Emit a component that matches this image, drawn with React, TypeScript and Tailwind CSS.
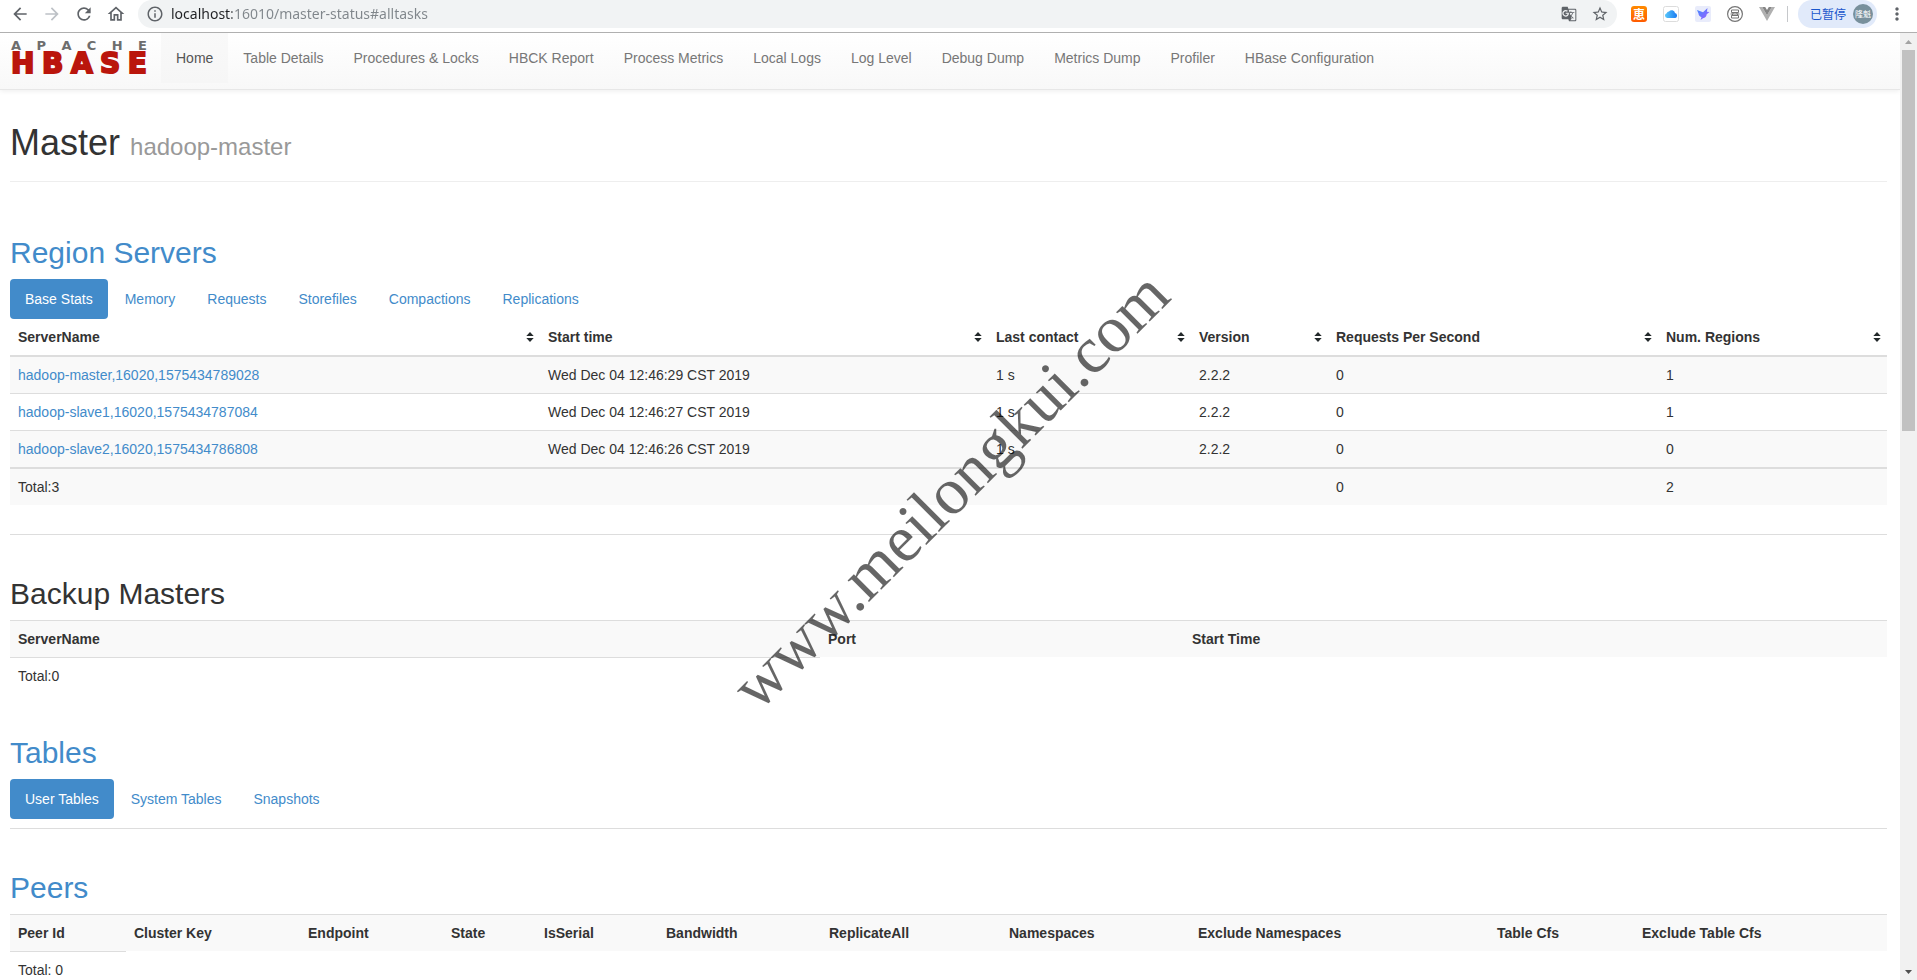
import { useState } from 'react';
import { MdArrowBack, MdArrowForward, MdRefresh, MdOutlineHome, MdInfoOutline, MdStarBorder, MdGTranslate, MdMoreVert } from 'react-icons/md';

interface RegionServer {
    name: string;
    startTime: string;
    lastContact: string;
    version: string;
    requests: number;
    regions: number;
}

const navItems = [
    'Home',
    'Table Details',
    'Procedures & Locks',
    'HBCK Report',
    'Process Metrics',
    'Local Logs',
    'Log Level',
    'Debug Dump',
    'Metrics Dump',
    'Profiler',
    'HBase Configuration',
];

const servers: RegionServer[] = [
    { name: 'hadoop-master,16020,1575434789028', startTime: 'Wed Dec 04 12:46:29 CST 2019', lastContact: '1 s', version: '2.2.2', requests: 0, regions: 1 },
    { name: 'hadoop-slave1,16020,1575434787084', startTime: 'Wed Dec 04 12:46:27 CST 2019', lastContact: '1 s', version: '2.2.2', requests: 0, regions: 1 },
    { name: 'hadoop-slave2,16020,1575434786808', startTime: 'Wed Dec 04 12:46:26 CST 2019', lastContact: '1 s', version: '2.2.2', requests: 0, regions: 0 },
];

const serverColumns = [
    { label: 'ServerName', width: 'w-[530px]' },
    { label: 'Start time', width: 'w-[448px]' },
    { label: 'Last contact', width: 'w-[203px]' },
    { label: 'Version', width: 'w-[137px]' },
    { label: 'Requests Per Second', width: 'w-[330px]' },
    { label: 'Num. Regions', width: 'w-[229px]' },
];

const backupColumns = [
    { label: 'ServerName', width: 'w-[810px]' },
    { label: 'Port', width: 'w-[364px]' },
    { label: 'Start Time', width: 'w-[703px]' },
];

const peerColumns = [
    { label: 'Peer Id', width: 'w-[116px]' },
    { label: 'Cluster Key', width: 'w-[174px]' },
    { label: 'Endpoint', width: 'w-[143px]' },
    { label: 'State', width: 'w-[93px]' },
    { label: 'IsSerial', width: 'w-[122px]' },
    { label: 'Bandwidth', width: 'w-[163px]' },
    { label: 'ReplicateAll', width: 'w-[180px]' },
    { label: 'Namespaces', width: 'w-[189px]' },
    { label: 'Exclude Namespaces', width: 'w-[299px]' },
    { label: 'Table Cfs', width: 'w-[145px]' },
    { label: 'Exclude Table Cfs', width: 'w-[253px]' },
];

function Extensions() {
    return (
        <div className="flex h-7 items-center gap-4">
            <button aria-label="Coupons" className="size-4 rounded-[3px] bg-linear-to-b from-[#ff8a00] to-[#ff5a00] font-['Noto_Sans_CJK_JP',sans-serif] text-xs leading-4 font-bold text-white">
                恵
            </button>
            <button aria-label="Cloud">
                <svg viewBox="0 0 16 16" className="size-4">
                    <defs>
                        <linearGradient id="cloud" x1="0" x2="1">
                            <stop offset="0" stopColor="#5ac8fa" />
                            <stop offset="1" stopColor="#1a7af0" />
                        </linearGradient>
                    </defs>
                    <rect x="0.5" y="0.5" width="15" height="15" rx="2" fill="#fff" stroke="#dcdcdc" />
                    <path d="M4.2 12a2.4 2.4 0 0 1-.5-4.7A2.3 2.3 0 0 1 6 5.600 3.300 3.300 0 0 1 12 7a2.600 2.600 0 0 1 .3 5z" fill="url(#cloud)" />
                </svg>
            </button>
            <button aria-label="Bird">
                <svg viewBox="0 0 16 16" className="size-4">
                    <defs>
                        <linearGradient id="bird" x1="0" x2="1" y2="1">
                            <stop offset="0" stopColor="#3f8cff" />
                            <stop offset="1" stopColor="#a259ff" />
                        </linearGradient>
                    </defs>
                    <rect width="16" height="16" rx="2" fill="#e9ecfb" />
                    <path d="M2 4l6 2.200L12.500 2l-.6 3.700 2.600.3-2.800 2.300c-.2 2.400-1.600 3.700-3.700 3.900L5.500 14l1-2.800C4.600 10.600 3.600 9.300 3.500 7.500z" fill="url(#bird)" />
                </svg>
            </button>
            <button aria-label="Seal">
                <svg viewBox="0 0 16 16" className="size-4" fill="none" stroke="#757575">
                    <circle cx="8" cy="8" r="7.4" strokeWidth="1.2" />
                    <path d="M4.500 4v2.500h7V4zM4.500 12V9.500h7V12zM3.500 8h9M6.500 6.500L5 9.500M9.500 6.500l1.500 3" />
                </svg>
            </button>
            <button aria-label="Vue">
                <svg viewBox="0 0 16 16" className="size-4">
                    <path d="M0 1h3.200L8 9.300 12.800 1H16L8 15z" fill="#b0b0b0" />
                    <path d="M3.200 1h3L8 4.100 9.800 1h3L8 9.300z" fill="#858585" />
                </svg>
            </button>
        </div>
    );
}

function BrowserBar() {
    const [url, setUrl] = useState('localhost:16010/master-status#alltasks');

    return (
        <header className="flex h-[33px] shrink-0 items-start border-b border-[#b0b0b0] bg-white px-[10px] text-[#5f6368]">
            <div className="flex h-7 items-center gap-3">
                <button aria-label="Back"><MdArrowBack className="size-5" /></button>
                <button aria-label="Forward" className="text-[#bdc1c6]"><MdArrowForward className="size-5" /></button>
                <button aria-label="Reload"><MdRefresh className="size-5" /></button>
                <button aria-label="Home page"><MdOutlineHome className="size-5" /></button>
            </div>
            <div className="mr-[14px] ml-3 flex h-7 min-w-0 flex-1 items-center rounded-full bg-[#f1f3f4] px-2">
                <MdInfoOutline className="size-[18px] shrink-0" />
                <input
                    aria-label="Address"
                    value={url}
                    onChange={e => setUrl(e.target.value)}
                    className="ml-[7px] min-w-0 flex-1 bg-[linear-gradient(90deg,#202124_61px,#80868b_61px)] bg-clip-text font-['Noto_Sans',sans-serif] text-sm text-transparent outline-none"
                />
                <div className="flex items-center gap-[14px]">
                    <button aria-label="Translate"><MdGTranslate className="size-4" /></button>
                    <button aria-label="Bookmark"><MdStarBorder className="size-[18px]" /></button>
                </div>
            </div>
            <Extensions />
            <div className="mr-[10px] ml-3 mt-1.5 h-4 w-px bg-[#c6c8cb]" />
            <button className="flex h-7 items-center gap-[7px] rounded-full bg-[#e1eafa] pr-1 pl-3 font-['Noto_Sans_CJK_SC',sans-serif] text-xs text-[#1a56cc]">
                已暂停
                <span className="flex size-5 items-center justify-center rounded-full bg-[#78909c] text-[8px] text-white">隆魁</span>
            </button>
            <button aria-label="Menu" className="ml-[10px] flex h-7 items-center"><MdMoreVert className="size-5" /></button>
        </header>
    );
}

function Logo() {
    return (
        <a href="#" aria-label="Apache HBase" className="mt-[7px] mr-[14px] ml-[11px] flex w-[136px] flex-col gap-px font-['DejaVu_Sans',sans-serif] font-bold">
            <span className="flex justify-between text-[13px] leading-[11px] text-[#6d6d6d]">
                {['A', 'P', 'A', 'C', 'H', 'E'].map((letter, i) => <span key={i}>{letter}</span>)}
            </span>
            <span className="flex justify-between text-[28px] leading-6 text-[#ba160c] [-webkit-text-stroke:2px_#ba160c]">
                {['H', 'B', 'A', 'S', 'E'].map(letter => <span key={letter}>{letter}</span>)}
            </span>
        </a>
    );
}

function Navbar() {
    return (
        <nav className="flex h-[57px] shrink-0 items-start border-b border-[#e7e7e7] bg-linear-to-b from-white to-[#f8f8f8] shadow-[0_1px_5px_rgba(0,0,0,0.075)]">
            <Logo />
            <ul className="flex">
                {navItems.map(item => (
                    <li key={item}>
                        <a
                            href="#"
                            className={`block p-[15px] leading-5 ${item === 'Home' ? 'bg-linear-to-b from-[#f9f9f9] to-[#f6f6f6] text-[#555]' : 'text-[#777]'}`}
                        >
                            {item}
                        </a>
                    </li>
                ))}
            </ul>
        </nav>
    );
}

function Pills({ items }: { items: string[] }) {
    const [active, setActive] = useState(items[0]);

    return (
        <div role="tablist" className="flex gap-0.5">
            {items.map(item => (
                <button
                    key={item}
                    role="tab"
                    aria-selected={item === active}
                    onClick={() => setActive(item)}
                    className={`rounded px-[15px] py-[10px] leading-5 ${item === active ? 'bg-[#428bca] text-white' : 'text-[#428bca]'}`}
                >
                    {item}
                </button>
            ))}
        </div>
    );
}

function SortIcon() {
    return (
        <svg viewBox="0 0 8 10" className="h-[10px] w-2 fill-[#23292b]">
            <path d="M4 0l3.700 4H.3zM.3 6h7.400L4 10z" />
        </svg>
    );
}

function ServersTable() {
    return (
        <table className="w-full table-fixed border-separate border-spacing-0 text-left">
            <thead>
                <tr>
                    {serverColumns.map(col => (
                        <th key={col.label} className={`border-b-2 border-[#ddd] py-2 pr-1.5 pl-2 font-bold ${col.width}`}>
                            <div className="flex items-center justify-between">
                                {col.label}
                                <SortIcon />
                            </div>
                        </th>
                    ))}
                </tr>
            </thead>
            <tbody className="[&>tr:nth-child(odd)]:bg-[#f9f9f9] [&>tr+tr>td]:border-t [&>tr+tr>td]:border-[#ddd]">
                {servers.map(s => (
                    <tr key={s.name}>
                        <td className="p-2"><a href="#" className="text-[#428bca]">{s.name}</a></td>
                        <td className="p-2">{s.startTime}</td>
                        <td className="p-2">{s.lastContact}</td>
                        <td className="p-2">{s.version}</td>
                        <td className="p-2">{s.requests}</td>
                        <td className="p-2">{s.regions}</td>
                    </tr>
                ))}
            </tbody>
            <tfoot className="bg-[#f9f9f9]">
                <tr className="[&>td]:border-t-2 [&>td]:border-[#ddd] [&>td]:p-2">
                    <td>Total:{servers.length}</td>
                    <td></td>
                    <td></td>
                    <td></td>
                    <td>0</td>
                    <td>2</td>
                </tr>
            </tfoot>
        </table>
    );
}

// Table with only a header row and a total
function EmptyTable({ columns, total }: { columns: { label: string; width: string }[]; total: string }) {
    return (
        <table className="w-full table-fixed border-separate border-spacing-0 text-left">
            <tbody>
                <tr className="bg-[#f9f9f9]">
                    {columns.map(col => (
                        <th key={col.label} className={`border-t border-[#ddd] p-2 font-bold ${col.width}`}>{col.label}</th>
                    ))}
                </tr>
                <tr>
                    <td className="border-t border-[#ddd] p-2">{total}</td>
                </tr>
            </tbody>
        </table>
    );
}

function Scrollbar() {
    return (
        <div aria-hidden="true" className="flex w-[17px] shrink-0 flex-col items-center justify-between bg-[#f1f1f1]">
            <div className="flex h-full flex-col items-center">
                <svg viewBox="0 0 17 17" className="size-[17px] fill-[#a3a3a3]"><path d="M5 11l3.500-4 3.500 4z" /></svg>
                <div className="h-[41%] w-[13px] bg-[#c1c1c1]" />
            </div>
            <svg viewBox="0 0 17 17" className="size-[17px] shrink-0 fill-[#505050]"><path d="M5 7l3.500 4L12 7z" /></svg>
        </div>
    );
}

export default function App() {
    return (
        <div className="relative flex h-screen flex-col overflow-hidden bg-white font-['Liberation_Sans',Arial,sans-serif] text-sm leading-5 text-[#333]">
            <BrowserBar />
            <div className="flex min-h-0 flex-1">
                <div className="flex min-w-0 flex-1 flex-col overflow-hidden">
                    <Navbar />
                    <main className="pt-[33px] pr-[13px] pl-[10px]">
                        <h1 className="border-b border-[#eee] pb-[18px] text-4xl leading-10">
                            Master <small className="text-2xl leading-none text-[#999]">hadoop-master</small>
                        </h1>

                        <section className="mt-[54px] border-b border-[#ddd] pb-[29px]">
                            <h2 className="mb-[10px] text-3xl leading-[33px]"><a href="#" className="text-[#428bca]">Region Servers</a></h2>
                            <Pills items={['Base Stats', 'Memory', 'Requests', 'Storefiles', 'Compactions', 'Replications']} />
                            <ServersTable />
                        </section>

                        <section className="mt-[42px]">
                            <h2 className="mb-[10px] text-3xl leading-[33px]">Backup Masters</h2>
                            <EmptyTable columns={backupColumns} total="Total:0" />
                        </section>

                        <section className="mt-[42px] border-b border-[#ddd] pb-[9px]">
                            <h2 className="mb-[10px] text-3xl leading-[33px]"><a href="#" className="text-[#428bca]">Tables</a></h2>
                            <Pills items={['User Tables', 'System Tables', 'Snapshots']} />
                        </section>

                        <section className="mt-[42px]">
                            <h2 className="mb-[10px] text-3xl leading-[33px]"><a href="#" className="text-[#428bca]">Peers</a></h2>
                            <EmptyTable columns={peerColumns} total="Total: 0" />
                        </section>
                    </main>
                </div>
                <Scrollbar />
            </div>

            {/* Watermark */}
            <div className="pointer-events-none absolute inset-y-0 right-[17px] left-0 flex items-center justify-center">
                <span className="-rotate-45 font-['Liberation_Serif',serif] text-[66px] leading-none whitespace-nowrap text-black/60">www.meilongkui.com</span>
            </div>
        </div>
    );
}
